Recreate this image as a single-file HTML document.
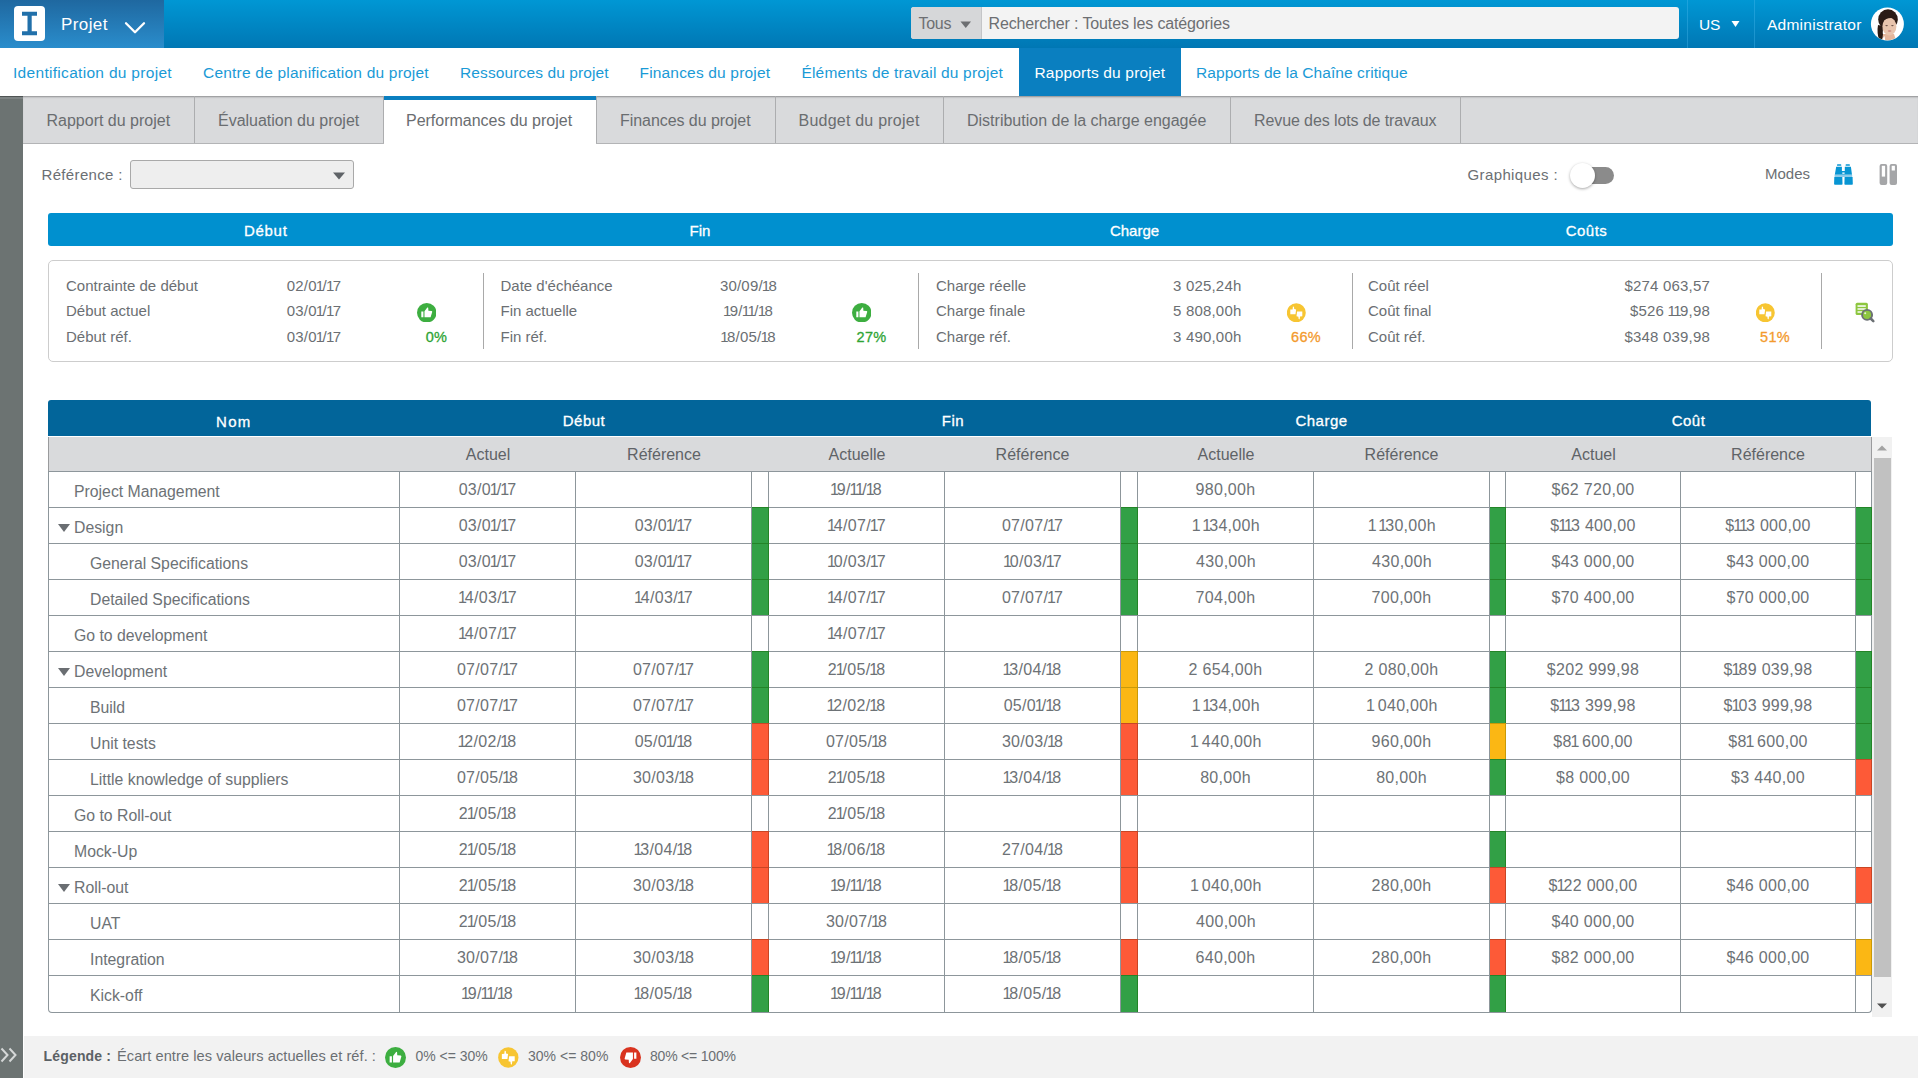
<!DOCTYPE html>
<html><head><meta charset="utf-8">
<style>
*{box-sizing:border-box;margin:0;padding:0}
html,body{width:1918px;height:1078px;overflow:hidden;background:#fff;font-family:"Liberation Sans",sans-serif;color:#666b70;position:relative}
div,span,svg{position:absolute}
.t{white-space:nowrap;line-height:1;}
.t span{position:static}
.t b{position:static;font-weight:normal;letter-spacing:0;margin:0 -2px 0 -1.2px}
.t i{position:static;font-style:normal;letter-spacing:0;margin:0 -1.6px 0 -1px}
#hdr{left:0;top:0;width:1918px;height:48px;background:linear-gradient(#0097d4,#0077b4)}
#hdrL{left:0;top:0;width:164px;height:48px;background:linear-gradient(#1f68a0,#2a8dcc)}
#logo{left:14px;top:6px;width:31px;height:35px;background:#fff;border-radius:4px}
#nav{left:0;top:48px;width:1918px;height:48px;background:#fff}
#navact{left:1019px;top:48px;width:162px;height:48px;background:#0a7fc0}
#side{left:0;top:96px;width:23px;height:982px;background:#6c7372}
#tabs{left:23px;top:96px;width:1895px;height:48px;background:#d9dadc;border-bottom:1px solid #b3b4b6;box-shadow:inset 0 2px 2px -1px rgba(0,0,0,.35)}
.tsep{top:96px;width:1px;height:47px;background:#acadaf}
#tabact{left:384px;top:96px;width:212px;height:48px;background:#fff;border-top:4px solid #0a7fc0}
#refdd{left:130px;top:160px;width:224px;height:29px;background:#eeeeee;border:1px solid #a9a9a9;border-radius:3px}
#sumbar{left:48px;top:213px;width:1845px;height:33px;background:#0090cf;border-radius:3px}
#sumbox{left:48px;top:260px;width:1845px;height:102px;border:1px solid #cdcdcd;border-radius:5px}
.dv{top:273px;width:1px;height:76px;background:#a9a9a9}
#th{left:48px;top:400px;width:1823px;height:36px;background:#02659a;border-radius:3px 3px 0 0}
#sub{left:48px;top:437px;width:1824px;height:34px;background:#d9dadc;border-left:1px solid #9a9b9d;border-right:1px solid #9a9b9d}
#tb{left:48px;top:471px;width:1824px;height:542px;border:1px solid #8d969b;border-top:none;border-radius:0 0 4px 4px}
.hl{left:48px;width:1823px;height:1px;background:#8d969b}
.vl{top:471px;width:1px;height:541px;background:#8d969b}
.ind{height:36px;border-top:1px solid;border-right:1px solid}
.tri{width:0;height:0;border-left:6px solid transparent;border-right:6px solid transparent;border-top:8px solid #6a6e72;left:58px}
#foot{left:24px;top:1036px;width:1894px;height:42px;background:#f2f2f2}
#sb{left:1872px;top:437px;width:20px;height:580px;background:#f1f1f1}
#thumb{left:1874px;top:458px;width:17px;height:519px;background:#c1c1c1}
</style></head><body>
<div id="hdr"></div>
<div id="hdrL"></div>
<div id="logo"></div>
<svg style="left:14px;top:6px" width="31" height="35" viewBox="0 0 31 35"><path d="M8 5.7h15v4h-5.3v15.6h5.3v4h-15v-4h5.5v-15.6h-5.5z" fill="#2170aa"/></svg>
<svg style="left:124px;top:21px" width="22" height="14" viewBox="0 0 22 14"><path d="M2 2.3l9 9 9-9" stroke="#fff" stroke-width="2.3" fill="none" stroke-linecap="round" stroke-linejoin="round"/></svg>
<!-- search -->
<div style="left:911px;top:7px;width:768px;height:32px;background:#f3f3f3;border-radius:3px"></div>
<div style="left:911px;top:7px;width:71px;height:32px;background:#d6d7d9;border-radius:3px 0 0 3px;border-right:1px solid #c4c5c7"></div>
<svg style="left:960px;top:21px" width="12" height="8" viewBox="0 0 12 8"><path d="M0.5 0.5h10.5l-5.25 6.6z" fill="#6d6f72"/></svg>
<div style="left:1687px;top:0;width:1px;height:48px;background:rgba(80,190,240,.35)"></div>
<div style="left:1754px;top:0;width:1px;height:48px;background:rgba(80,190,240,.35)"></div>
<svg style="left:1731px;top:20px" width="9" height="8" viewBox="0 0 9 8"><path d="M0.5 1h8l-4 6z" fill="#fff"/></svg>
<svg style="left:1870px;top:7px" width="35" height="35" viewBox="0 0 35 35">
<defs><clipPath id="av"><circle cx="17.4" cy="17" r="16.3"/></clipPath></defs>
<circle cx="17.4" cy="17" r="16.5" fill="#fff"/>
<g clip-path="url(#av)">
<path d="M8 18 Q6.5 26 9.5 34 L14 34 Q12 26 13 19 Z" fill="#2a1a14"/>
<ellipse cx="18" cy="12.5" rx="9.8" ry="10.3" fill="#2b1b15"/>
<path d="M13 27 L24 27 L26.5 35 L12 35 Z" fill="#e4b69c"/>
<path d="M11.5 33 L14.5 29 L15.5 35 L11 35Z" fill="#fff"/>
<ellipse cx="19.4" cy="19.5" rx="7" ry="9" fill="#e8c4ad"/>
<path d="M11.5 16 Q14 7.5 20 7.2 Q26.5 7.5 27.6 14.5 Q24.5 9.8 18.5 11.2 Q13.5 12.5 11.5 16 Z" fill="#2b1b15"/>
<ellipse cx="16.6" cy="18.6" rx="1.3" ry=".55" fill="#6a5048"/>
<ellipse cx="22.4" cy="18.6" rx="1.3" ry=".55" fill="#6a5048"/>
<ellipse cx="19.6" cy="24" rx="1.9" ry=".75" fill="#c98078"/>
</g>
</svg>
<div id="nav"></div>
<div id="navact"></div>
<div id="side"></div><div style="left:0;top:96px;width:23px;height:1px;background:#4f5454"></div><div style="left:0;top:97px;width:23px;height:2px;background:#7d8383"></div>
<div id="tabs"></div>
<div class="tsep" style="left:194px"></div>
<div class="tsep" style="left:383px"></div>
<div class="tsep" style="left:596px"></div>
<div class="tsep" style="left:775px"></div>
<div class="tsep" style="left:943px"></div>
<div class="tsep" style="left:1230px"></div>
<div class="tsep" style="left:1460px"></div>
<div id="tabact"></div>
<div id="refdd"></div>
<svg style="left:332px;top:171px" width="14" height="10" viewBox="0 0 14 10"><path d="M1 1.5h12l-6 7z" fill="#5f6367"/></svg>
<!-- toggle -->
<div style="left:1582px;top:167px;width:32px;height:17px;border-radius:9px;background:#8b8b8b"></div>
<div style="left:1570px;top:163px;width:25px;height:25px;border-radius:50%;background:#fff;box-shadow:0 1px 3px rgba(0,0,0,.35)"></div>
<!-- binoculars -->
<svg style="left:1833px;top:163px" width="21" height="23" viewBox="0 0 21 23">
<g fill="#0795d3"><rect x="4" y="1.3" width="4.3" height="1.5" rx=".6"/><rect x="12.6" y="1.3" width="4.3" height="1.5" rx=".6"/>
<path d="M3.2 3.8H8.9V7.9H11.8V3.8H17.9L19 11.8H1.8Z"/>
<path d="M1.3 14H9.3L9.5 21Q9.5 21.7 8.7 21.7H1.9Q1.1 21.7 1.1 21Z"/><path d="M11.6 14H19.6L19.8 21Q19.8 21.7 19 21.7H12.2Q11.4 21.7 11.4 21Z"/></g>
<rect x="1.6" y="11.8" width="17.6" height="2.2" fill="#8dcbe9"/>
<rect x="9.3" y="9.5" width="2.3" height="1.3" fill="#fff"/>
</svg>
<!-- columns icon -->
<svg style="left:1879px;top:163px" width="19" height="23" viewBox="0 0 19 23">
<rect x="0.6" y="1" width="7.6" height="21" rx="2" fill="#a5a6a8"/><rect x="10.6" y="1" width="7.4" height="21" rx="2" fill="#a5a6a8"/>
<rect x="2.8" y="2.8" width="3.3" height="10.8" fill="#fff"/><rect x="12.7" y="2.8" width="3.2" height="4.7" fill="#fff"/>
</svg>
<div id="sumbar"></div>
<div id="sumbox"></div>
<div class="dv" style="left:483px"></div>
<div class="dv" style="left:918px"></div>
<div class="dv" style="left:1352px"></div>
<div class="dv" style="left:1821px"></div>
<!-- summary icons -->
<svg style="left:416.7px;top:302.6px" width="19.5" height="19.5" viewBox="0 0 19.5 19.5"><circle cx="9.75" cy="9.75" r="9.75" fill="#3dae40"/><path d="M4.3 8.5H6.4V14.3H4.3Z M7.5 8.3L10.3 4.6Q10.9 4.1 11.2 4.8L11.4 7.7L14.6 7.9Q15.3 8.1 15.2 8.9L13.6 14.3L7.5 14.3Z" fill="#fff"/></svg>
<svg style="left:851.9px;top:302.6px" width="19.5" height="19.5" viewBox="0 0 19.5 19.5"><circle cx="9.75" cy="9.75" r="9.75" fill="#3dae40"/><path d="M4.3 8.5H6.4V14.3H4.3Z M7.5 8.3L10.3 4.6Q10.9 4.1 11.2 4.8L11.4 7.7L14.6 7.9Q15.3 8.1 15.2 8.9L13.6 14.3L7.5 14.3Z" fill="#fff"/></svg>
<svg style="left:1286.7px;top:302.6px" width="19" height="19.6" viewBox="0 0 19 19.6"><circle cx="9.3" cy="9.8" r="9.5" fill="#f7c532"/><g fill="#fff"><path d="M3.3 6.6L5.6 6.4L5.9 3.6Q6.6 3.3 7 4L7.2 6.1L9.1 6.6L8.5 11.2L3.3 11.2Z"/><path transform="rotate(180 9.3 9.9)" d="M3.3 6.6L5.6 6.4L5.9 3.6Q6.6 3.3 7 4L7.2 6.1L9.1 6.6L8.5 11.2L3.3 11.2Z"/></g></svg>
<svg style="left:1756px;top:302.6px" width="19" height="19.6" viewBox="0 0 19 19.6"><circle cx="9.3" cy="9.8" r="9.5" fill="#f7c532"/><g fill="#fff"><path d="M3.3 6.6L5.6 6.4L5.9 3.6Q6.6 3.3 7 4L7.2 6.1L9.1 6.6L8.5 11.2L3.3 11.2Z"/><path transform="rotate(180 9.3 9.9)" d="M3.3 6.6L5.6 6.4L5.9 3.6Q6.6 3.3 7 4L7.2 6.1L9.1 6.6L8.5 11.2L3.3 11.2Z"/></g></svg>
<!-- report icon -->
<svg style="left:1850px;top:298px" width="28" height="28" viewBox="0 0 28 28">
<rect x="5.6" y="4.8" width="12.3" height="12.3" rx="1.5" fill="#8dc63f"/>
<g fill="#e6f2d9"><rect x="7.5" y="7.1" width="8.3" height="1.9"/><rect x="7.5" y="10.1" width="8.3" height="1.8"/><rect x="7.5" y="13.1" width="5" height="1.8"/></g>
<circle cx="17.1" cy="16.9" r="5" fill="#8dc63f" stroke="#6b7074" stroke-width="1.9"/>
<circle cx="15.2" cy="15.3" r="1" fill="#fff" opacity=".8"/>
<path d="M20.7 20.5L23.3 23.1" stroke="#6b7074" stroke-width="2.6" stroke-linecap="round"/>
</svg>
<div id="th"></div>
<div id="sub"></div>
<div id="sb"></div>
<div id="thumb"></div>
<svg style="left:1876px;top:444px" width="12" height="8" viewBox="0 0 12 8"><path d="M1 6.5h10l-5-5z" fill="#a3a3a3"/></svg>
<svg style="left:1876px;top:1002px" width="12" height="8" viewBox="0 0 12 8"><path d="M1 1.5h10l-5 5z" fill="#505050"/></svg>
<div id="tb"></div>
<div class="hl" style="top:507px"></div><div class="hl" style="top:543px"></div><div class="hl" style="top:579px"></div>
<div class="hl" style="top:615px"></div><div class="hl" style="top:651px"></div><div class="hl" style="top:687px"></div>
<div class="hl" style="top:723px"></div><div class="hl" style="top:759px"></div><div class="hl" style="top:795px"></div>
<div class="hl" style="top:831px"></div><div class="hl" style="top:867px"></div><div class="hl" style="top:903px"></div>
<div class="hl" style="top:939px"></div><div class="hl" style="top:975px"></div>
<div class="hl" style="top:471px"></div>
<div class="vl" style="left:399px"></div><div class="vl" style="left:575px"></div><div class="vl" style="left:751px"></div>
<div class="vl" style="left:768px"></div><div class="vl" style="left:944px"></div><div class="vl" style="left:1120px"></div>
<div class="vl" style="left:1137px"></div><div class="vl" style="left:1313px"></div><div class="vl" style="left:1489px"></div>
<div class="vl" style="left:1505px"></div><div class="vl" style="left:1680px"></div><div class="vl" style="left:1855px"></div>
<div class="tri" style="top:524px"></div>
<div class="ind" style="left:752px;top:507px;width:17px;background:#32a046;border-color:#238427"></div>
<div class="ind" style="left:1121px;top:507px;width:17px;background:#32a046;border-color:#238427"></div>
<div class="ind" style="left:1490px;top:507px;width:16px;background:#32a046;border-color:#238427"></div>
<div class="ind" style="left:1856px;top:507px;width:16px;background:#32a046;border-color:#238427"></div>
<div class="ind" style="left:752px;top:543px;width:17px;background:#32a046;border-color:#238427"></div>
<div class="ind" style="left:1121px;top:543px;width:17px;background:#32a046;border-color:#238427"></div>
<div class="ind" style="left:1490px;top:543px;width:16px;background:#32a046;border-color:#238427"></div>
<div class="ind" style="left:1856px;top:543px;width:16px;background:#32a046;border-color:#238427"></div>
<div class="ind" style="left:752px;top:579px;width:17px;background:#32a046;border-color:#238427"></div>
<div class="ind" style="left:1121px;top:579px;width:17px;background:#32a046;border-color:#238427"></div>
<div class="ind" style="left:1490px;top:579px;width:16px;background:#32a046;border-color:#238427"></div>
<div class="ind" style="left:1856px;top:579px;width:16px;background:#32a046;border-color:#238427"></div>
<div class="tri" style="top:668px"></div>
<div class="ind" style="left:752px;top:651px;width:17px;background:#32a046;border-color:#238427"></div>
<div class="ind" style="left:1121px;top:651px;width:17px;background:#fbb714;border-color:#c99a08"></div>
<div class="ind" style="left:1490px;top:651px;width:16px;background:#32a046;border-color:#238427"></div>
<div class="ind" style="left:1856px;top:651px;width:16px;background:#32a046;border-color:#238427"></div>
<div class="ind" style="left:752px;top:687px;width:17px;background:#32a046;border-color:#238427"></div>
<div class="ind" style="left:1121px;top:687px;width:17px;background:#fbb714;border-color:#c99a08"></div>
<div class="ind" style="left:1490px;top:687px;width:16px;background:#32a046;border-color:#238427"></div>
<div class="ind" style="left:1856px;top:687px;width:16px;background:#32a046;border-color:#238427"></div>
<div class="ind" style="left:752px;top:723px;width:17px;background:#fd5a37;border-color:#c84524"></div>
<div class="ind" style="left:1121px;top:723px;width:17px;background:#fd5a37;border-color:#c84524"></div>
<div class="ind" style="left:1490px;top:723px;width:16px;background:#fbb714;border-color:#c99a08"></div>
<div class="ind" style="left:1856px;top:723px;width:16px;background:#32a046;border-color:#238427"></div>
<div class="ind" style="left:752px;top:759px;width:17px;background:#fd5a37;border-color:#c84524"></div>
<div class="ind" style="left:1121px;top:759px;width:17px;background:#fd5a37;border-color:#c84524"></div>
<div class="ind" style="left:1490px;top:759px;width:16px;background:#32a046;border-color:#238427"></div>
<div class="ind" style="left:1856px;top:759px;width:16px;background:#fd5a37;border-color:#c84524"></div>
<div class="ind" style="left:752px;top:831px;width:17px;background:#fd5a37;border-color:#c84524"></div>
<div class="ind" style="left:1121px;top:831px;width:17px;background:#fd5a37;border-color:#c84524"></div>
<div class="ind" style="left:1490px;top:831px;width:16px;background:#32a046;border-color:#238427"></div>
<div class="tri" style="top:884px"></div>
<div class="ind" style="left:752px;top:867px;width:17px;background:#fd5a37;border-color:#c84524"></div>
<div class="ind" style="left:1121px;top:867px;width:17px;background:#fd5a37;border-color:#c84524"></div>
<div class="ind" style="left:1490px;top:867px;width:16px;background:#fd5a37;border-color:#c84524"></div>
<div class="ind" style="left:1856px;top:867px;width:16px;background:#fd5a37;border-color:#c84524"></div>
<div class="ind" style="left:752px;top:939px;width:17px;background:#fd5a37;border-color:#c84524"></div>
<div class="ind" style="left:1121px;top:939px;width:17px;background:#fd5a37;border-color:#c84524"></div>
<div class="ind" style="left:1490px;top:939px;width:16px;background:#fd5a37;border-color:#c84524"></div>
<div class="ind" style="left:1856px;top:939px;width:16px;background:#fbb714;border-color:#c99a08"></div>
<div class="ind" style="left:752px;top:975px;width:17px;height:37px;background:#32a046;border-color:#238427"></div>
<div class="ind" style="left:1121px;top:975px;width:17px;height:37px;background:#32a046;border-color:#238427"></div>
<div class="ind" style="left:1490px;top:975px;width:16px;height:37px;background:#32a046;border-color:#238427"></div>
<div id="foot"></div>
<svg style="left:0;top:1047px" width="20" height="16" viewBox="0 0 20 16"><path d="M1.5 1.5l6 6.5-6 6.5 M9.5 1.5l6 6.5-6 6.5" stroke="#d5d7d7" stroke-width="2" fill="none"/></svg>
<svg style="left:385px;top:1047px" width="21" height="21" viewBox="0 0 19.5 19.5"><circle cx="9.75" cy="9.75" r="9.75" fill="#3dae40"/><path d="M4.3 8.5H6.4V14.3H4.3Z M7.5 8.3L10.3 4.6Q10.9 4.1 11.2 4.8L11.4 7.7L14.6 7.9Q15.3 8.1 15.2 8.9L13.6 14.3L7.5 14.3Z" fill="#fff"/></svg>
<svg style="left:498px;top:1047px" width="21" height="21" viewBox="0 0 19 19.6"><circle cx="9.3" cy="9.8" r="9.5" fill="#f7c532"/><g fill="#fff"><path d="M3.3 6.6L5.6 6.4L5.9 3.6Q6.6 3.3 7 4L7.2 6.1L9.1 6.6L8.5 11.2L3.3 11.2Z"/><path transform="rotate(180 9.3 9.9)" d="M3.3 6.6L5.6 6.4L5.9 3.6Q6.6 3.3 7 4L7.2 6.1L9.1 6.6L8.5 11.2L3.3 11.2Z"/></g></svg>
<svg style="left:620px;top:1047px" width="21" height="21" viewBox="0 0 19.5 19.5"><circle cx="9.75" cy="9.75" r="9.75" fill="#d9331f"/><path transform="rotate(180 9.75 9.75)" d="M4.3 8.5H6.4V14.3H4.3Z M7.5 8.3L10.3 4.6Q10.9 4.1 11.2 4.8L11.4 7.7L14.6 7.9Q15.3 8.1 15.2 8.9L13.6 14.3L7.5 14.3Z" fill="#fff"/></svg>
<span id="x0" class="t" style="top:15.61px;font-size:17px;color:#fff;letter-spacing:0.400px;left:61.00px;">Projet</span>
<span id="x1" class="t" style="top:16.46px;font-size:16px;color:#6d6f72;letter-spacing:-0.267px;left:918.50px;">Tous</span>
<span id="x2" class="t" style="top:16.46px;font-size:16px;color:#6d6f72;letter-spacing:-0.139px;left:988.50px;">Rechercher : Toutes les catégories</span>
<span id="x3" class="t" style="top:16.88px;font-size:15.5px;color:#fff;letter-spacing:-0.200px;left:1699.00px;">US</span>
<span id="x4" class="t" style="top:16.88px;font-size:15.5px;color:#fff;letter-spacing:0.250px;left:1767.00px;">Administrator</span>
<span id="x5" class="t" style="top:64.88px;font-size:15.5px;color:#1a9ad6;letter-spacing:0.304px;left:13.00px;">Identification du projet</span>
<span id="x6" class="t" style="top:64.88px;font-size:15.5px;color:#1a9ad6;letter-spacing:0.212px;left:203.00px;">Centre de planification du projet</span>
<span id="x7" class="t" style="top:64.88px;font-size:15.5px;color:#1a9ad6;letter-spacing:0.116px;left:460.00px;">Ressources du projet</span>
<span id="x8" class="t" style="top:64.88px;font-size:15.5px;color:#1a9ad6;letter-spacing:0.176px;left:639.50px;">Finances du projet</span>
<span id="x9" class="t" style="top:64.88px;font-size:15.5px;color:#1a9ad6;letter-spacing:0.171px;left:801.50px;">Éléments de travail du projet</span>
<span id="x10" class="t" style="top:64.88px;font-size:15.5px;color:#1a9ad6;letter-spacing:0.076px;left:1196.00px;">Rapports de la Chaîne critique</span>
<span id="x11" class="t" style="top:64.88px;font-size:15.5px;color:#fff;letter-spacing:0.176px;left:1034.50px;">Rapports du projet</span>
<span id="x12" class="t" style="top:113.46px;font-size:16px;color:#6a6d70;left:46.50px;">Rapport du projet</span>
<span id="x13" class="t" style="top:113.46px;font-size:16px;color:#6a6d70;letter-spacing:-0.011px;left:218.00px;">Évaluation du projet</span>
<span id="x14" class="t" style="top:113.46px;font-size:16px;color:#6a6d70;letter-spacing:-0.010px;left:406.00px;">Performances du projet</span>
<span id="x15" class="t" style="top:113.46px;font-size:16px;color:#6a6d70;letter-spacing:-0.059px;left:620.00px;">Finances du projet</span>
<span id="x16" class="t" style="top:113.46px;font-size:16px;color:#6a6d70;letter-spacing:0.227px;left:798.50px;">Budget du projet</span>
<span id="x17" class="t" style="top:113.46px;font-size:16px;color:#6a6d70;left:967.00px;">Distribution de la charge engagée</span>
<span id="x18" class="t" style="top:113.46px;font-size:16px;color:#6a6d70;letter-spacing:-0.100px;left:1254.00px;">Revue des lots de travaux</span>
<span id="x19" class="t" style="top:167.30px;font-size:15px;color:#6b6f73;letter-spacing:0.340px;left:41.50px;">Référence :</span>
<span id="x20" class="t" style="top:167.30px;font-size:15px;color:#6b6f73;letter-spacing:0.382px;left:1467.50px;">Graphiques :</span>
<span id="x21" class="t" style="top:166.30px;font-size:15px;color:#6b6f73;left:1765.00px;">Modes</span>
<div class="t" style="top:223.30px;font-size:15px;color:#fff;-webkit-text-stroke:0.3px currentColor;letter-spacing:0.700px;left:-34.25px;width:600px;text-align:center;"><span id="x22">Début</span></div>
<div class="t" style="top:223.30px;font-size:15px;color:#fff;-webkit-text-stroke:0.3px currentColor;left:400.00px;width:600px;text-align:center;"><span id="x23">Fin</span></div>
<div class="t" style="top:223.30px;font-size:15px;color:#fff;-webkit-text-stroke:0.3px currentColor;left:834.50px;width:600px;text-align:center;"><span id="x24">Charge</span></div>
<div class="t" style="top:223.30px;font-size:15px;color:#fff;-webkit-text-stroke:0.3px currentColor;letter-spacing:0.500px;left:1286.50px;width:600px;text-align:center;"><span id="x25">Coûts</span></div>
<span id="x26" class="t" style="top:278.30px;font-size:15px;color:#6b6f73;letter-spacing:0.011px;left:66.00px;">Contrainte de début</span>
<div class="t" style="top:278.30px;font-size:15px;color:#6b6f73;letter-spacing:0.200px;left:14.00px;width:600px;text-align:center;"><span id="x27">02/0<i>1</i>/<i>1</i>7</span></div>
<span id="x28" class="t" style="top:303.30px;font-size:15px;color:#6b6f73;left:66.00px;">Début actuel</span>
<div class="t" style="top:303.30px;font-size:15px;color:#6b6f73;letter-spacing:0.200px;left:14.00px;width:600px;text-align:center;"><span id="x29">03/0<i>1</i>/<i>1</i>7</span></div>
<span id="x30" class="t" style="top:329.30px;font-size:15px;color:#6b6f73;left:66.00px;">Début réf.</span>
<div class="t" style="top:329.30px;font-size:15px;color:#6b6f73;letter-spacing:0.200px;left:14.00px;width:600px;text-align:center;"><span id="x31">03/0<i>1</i>/<i>1</i>7</span></div>
<div class="t" style="top:329.73px;font-size:14.5px;color:#2fa434;-webkit-text-stroke:0.3px currentColor;letter-spacing:0.300px;left:136.50px;width:600px;text-align:center;"><span id="x32">0%</span></div>
<span id="x33" class="t" style="top:278.30px;font-size:15px;color:#6b6f73;left:500.50px;">Date d'échéance</span>
<div class="t" style="top:278.30px;font-size:15px;color:#6b6f73;letter-spacing:0.200px;left:448.50px;width:600px;text-align:center;"><span id="x34">30/09/<i>1</i>8</span></div>
<span id="x35" class="t" style="top:303.30px;font-size:15px;color:#6b6f73;left:500.50px;">Fin actuelle</span>
<div class="t" style="top:303.30px;font-size:15px;color:#6b6f73;letter-spacing:0.200px;left:448.50px;width:600px;text-align:center;"><span id="x36"><i>1</i>9/<i>1</i><i>1</i>/<i>1</i>8</span></div>
<span id="x37" class="t" style="top:329.30px;font-size:15px;color:#6b6f73;left:500.50px;">Fin réf.</span>
<div class="t" style="top:329.30px;font-size:15px;color:#6b6f73;letter-spacing:0.200px;left:448.50px;width:600px;text-align:center;"><span id="x38"><i>1</i>8/05/<i>1</i>8</span></div>
<div class="t" style="top:329.73px;font-size:14.5px;color:#2fa434;-webkit-text-stroke:0.3px currentColor;letter-spacing:0.300px;left:571.50px;width:600px;text-align:center;"><span id="x39">27%</span></div>
<span id="x40" class="t" style="top:278.30px;font-size:15px;color:#6b6f73;left:936.00px;">Charge réelle</span>
<div class="t" style="top:278.30px;font-size:15px;color:#6b6f73;letter-spacing:0.200px;left:641.50px;width:600px;text-align:right;"><span id="x41">3 025,24h</span></div>
<span id="x42" class="t" style="top:303.30px;font-size:15px;color:#6b6f73;left:936.00px;">Charge finale</span>
<div class="t" style="top:303.30px;font-size:15px;color:#6b6f73;letter-spacing:0.200px;left:641.50px;width:600px;text-align:right;"><span id="x43">5 808,00h</span></div>
<span id="x44" class="t" style="top:329.30px;font-size:15px;color:#6b6f73;left:936.00px;">Charge réf.</span>
<div class="t" style="top:329.30px;font-size:15px;color:#6b6f73;letter-spacing:0.200px;left:641.50px;width:600px;text-align:right;"><span id="x45">3 490,00h</span></div>
<div class="t" style="top:329.73px;font-size:14.5px;color:#f39a2d;-webkit-text-stroke:0.3px currentColor;letter-spacing:0.300px;left:1006.00px;width:600px;text-align:center;"><span id="x46">66%</span></div>
<span id="x47" class="t" style="top:278.30px;font-size:15px;color:#6b6f73;left:1368.00px;">Coût réel</span>
<div class="t" style="top:278.30px;font-size:15px;color:#6b6f73;letter-spacing:0.200px;left:1110.00px;width:600px;text-align:right;"><span id="x48">$274 063,57</span></div>
<span id="x49" class="t" style="top:303.30px;font-size:15px;color:#6b6f73;left:1368.00px;">Coût final</span>
<div class="t" style="top:303.30px;font-size:15px;color:#6b6f73;letter-spacing:0.200px;left:1110.00px;width:600px;text-align:right;"><span id="x50">$526 <i>1</i><i>1</i>9,98</span></div>
<span id="x51" class="t" style="top:329.30px;font-size:15px;color:#6b6f73;left:1368.00px;">Coût réf.</span>
<div class="t" style="top:329.30px;font-size:15px;color:#6b6f73;letter-spacing:0.200px;left:1110.00px;width:600px;text-align:right;"><span id="x52">$348 039,98</span></div>
<div class="t" style="top:329.73px;font-size:14.5px;color:#f39a2d;-webkit-text-stroke:0.3px currentColor;letter-spacing:0.300px;left:1475.00px;width:600px;text-align:center;"><span id="x53">51%</span></div>
<div class="t" style="top:414.30px;font-size:15px;color:#fff;-webkit-text-stroke:0.3px currentColor;letter-spacing:1.200px;left:-66.25px;width:600px;text-align:center;"><span id="x54">Nom</span></div>
<div class="t" style="top:413.30px;font-size:15px;color:#fff;-webkit-text-stroke:0.3px currentColor;letter-spacing:0.500px;left:284.00px;width:600px;text-align:center;"><span id="x55">Début</span></div>
<div class="t" style="top:413.30px;font-size:15px;color:#fff;-webkit-text-stroke:0.3px currentColor;letter-spacing:0.500px;left:653.00px;width:600px;text-align:center;"><span id="x56">Fin</span></div>
<div class="t" style="top:413.30px;font-size:15px;color:#fff;-webkit-text-stroke:0.3px currentColor;letter-spacing:0.500px;left:1021.50px;width:600px;text-align:center;"><span id="x57">Charge</span></div>
<div class="t" style="top:413.30px;font-size:15px;color:#fff;-webkit-text-stroke:0.3px currentColor;letter-spacing:0.500px;left:1388.50px;width:600px;text-align:center;"><span id="x58">Coût</span></div>
<div class="t" style="top:447.46px;font-size:16px;color:#5f6367;left:188.00px;width:600px;text-align:center;"><span id="x59">Actuel</span></div>
<div class="t" style="top:447.46px;font-size:16px;color:#5f6367;left:364.00px;width:600px;text-align:center;"><span id="x60">Référence</span></div>
<div class="t" style="top:447.46px;font-size:16px;color:#5f6367;left:557.00px;width:600px;text-align:center;"><span id="x61">Actuelle</span></div>
<div class="t" style="top:447.46px;font-size:16px;color:#5f6367;left:732.50px;width:600px;text-align:center;"><span id="x62">Référence</span></div>
<div class="t" style="top:447.46px;font-size:16px;color:#5f6367;left:926.00px;width:600px;text-align:center;"><span id="x63">Actuelle</span></div>
<div class="t" style="top:447.46px;font-size:16px;color:#5f6367;left:1101.50px;width:600px;text-align:center;"><span id="x64">Référence</span></div>
<div class="t" style="top:447.46px;font-size:16px;color:#5f6367;left:1293.50px;width:600px;text-align:center;"><span id="x65">Actuel</span></div>
<div class="t" style="top:447.46px;font-size:16px;color:#5f6367;left:1468.00px;width:600px;text-align:center;"><span id="x66">Référence</span></div>
<span id="x67" class="t" style="top:1049.15px;font-size:14px;color:#5b6165;font-weight:bold;letter-spacing:0.175px;left:43.50px;">Légende :</span>
<span id="x68" class="t" style="top:1048.64px;font-size:14.6px;color:#6b6f73;letter-spacing:0.062px;left:117.00px;">Écart entre les valeurs actuelles et réf. :</span>
<span id="x69" class="t" style="top:1049.15px;font-size:14px;color:#6b6f73;letter-spacing:-0.025px;left:415.50px;">0% &lt;= 30%</span>
<span id="x70" class="t" style="top:1049.15px;font-size:14px;color:#6b6f73;letter-spacing:0.022px;left:528.00px;">30% &lt;= 80%</span>
<span id="x71" class="t" style="top:1049.15px;font-size:14px;color:#6b6f73;letter-spacing:-0.200px;left:650.00px;">80% &lt;= 100%</span>
<span id="x72" class="t" style="top:483.63px;font-size:15.8px;color:#6d7276;left:74.00px;">Project Management</span>
<div class="t" style="top:482.46px;font-size:16px;color:#6d7276;letter-spacing:0.300px;left:187.50px;width:600px;text-align:center;"><span id="x73">03/0<b class="o">1</b>/<b class="o">1</b>7</span></div>
<div class="t" style="top:482.46px;font-size:16px;color:#6d7276;letter-spacing:0.300px;left:556.50px;width:600px;text-align:center;"><span id="x74"><b class="o">1</b>9/<b class="o">1</b><b class="o">1</b>/<b class="o">1</b>8</span></div>
<div class="t" style="top:482.46px;font-size:16px;color:#6d7276;letter-spacing:0.300px;left:925.50px;width:600px;text-align:center;"><span id="x75">980,00h</span></div>
<div class="t" style="top:482.46px;font-size:16px;color:#6d7276;letter-spacing:0.300px;left:1293.00px;width:600px;text-align:center;"><span id="x76">$62 720,00</span></div>
<span id="x77" class="t" style="top:519.63px;font-size:15.8px;color:#6d7276;left:74.00px;">Design</span>
<div class="t" style="top:518.46px;font-size:16px;color:#6d7276;letter-spacing:0.300px;left:187.50px;width:600px;text-align:center;"><span id="x78">03/0<b class="o">1</b>/<b class="o">1</b>7</span></div>
<div class="t" style="top:518.46px;font-size:16px;color:#6d7276;letter-spacing:0.300px;left:363.50px;width:600px;text-align:center;"><span id="x79">03/0<b class="o">1</b>/<b class="o">1</b>7</span></div>
<div class="t" style="top:518.46px;font-size:16px;color:#6d7276;letter-spacing:0.300px;left:557.00px;width:600px;text-align:center;"><span id="x80"><b class="o">1</b>4/07/<b class="o">1</b>7</span></div>
<div class="t" style="top:518.46px;font-size:16px;color:#6d7276;letter-spacing:0.300px;left:732.50px;width:600px;text-align:center;"><span id="x81">07/07/<b class="o">1</b>7</span></div>
<div class="t" style="top:518.46px;font-size:16px;color:#6d7276;letter-spacing:0.300px;left:926.50px;width:600px;text-align:center;"><span id="x82"><b class="o">1</b> <b class="o">1</b>34,00h</span></div>
<div class="t" style="top:518.46px;font-size:16px;color:#6d7276;letter-spacing:0.300px;left:1102.50px;width:600px;text-align:center;"><span id="x83"><b class="o">1</b> <b class="o">1</b>30,00h</span></div>
<div class="t" style="top:518.46px;font-size:16px;color:#6d7276;letter-spacing:0.300px;left:1293.00px;width:600px;text-align:center;"><span id="x84">$<b class="o">1</b><b class="o">1</b>3 400,00</span></div>
<div class="t" style="top:518.46px;font-size:16px;color:#6d7276;letter-spacing:0.300px;left:1468.00px;width:600px;text-align:center;"><span id="x85">$<b class="o">1</b><b class="o">1</b>3 000,00</span></div>
<span id="x86" class="t" style="top:555.63px;font-size:15.8px;color:#6d7276;left:90.00px;">General Specifications</span>
<div class="t" style="top:554.46px;font-size:16px;color:#6d7276;letter-spacing:0.300px;left:187.50px;width:600px;text-align:center;"><span id="x87">03/0<b class="o">1</b>/<b class="o">1</b>7</span></div>
<div class="t" style="top:554.46px;font-size:16px;color:#6d7276;letter-spacing:0.300px;left:363.50px;width:600px;text-align:center;"><span id="x88">03/0<b class="o">1</b>/<b class="o">1</b>7</span></div>
<div class="t" style="top:554.46px;font-size:16px;color:#6d7276;letter-spacing:0.300px;left:557.00px;width:600px;text-align:center;"><span id="x89"><b class="o">1</b>0/03/<b class="o">1</b>7</span></div>
<div class="t" style="top:554.46px;font-size:16px;color:#6d7276;letter-spacing:0.300px;left:733.00px;width:600px;text-align:center;"><span id="x90"><b class="o">1</b>0/03/<b class="o">1</b>7</span></div>
<div class="t" style="top:554.46px;font-size:16px;color:#6d7276;letter-spacing:0.300px;left:926.00px;width:600px;text-align:center;"><span id="x91">430,00h</span></div>
<div class="t" style="top:554.46px;font-size:16px;color:#6d7276;letter-spacing:0.300px;left:1102.00px;width:600px;text-align:center;"><span id="x92">430,00h</span></div>
<div class="t" style="top:554.46px;font-size:16px;color:#6d7276;letter-spacing:0.300px;left:1293.00px;width:600px;text-align:center;"><span id="x93">$43 000,00</span></div>
<div class="t" style="top:554.46px;font-size:16px;color:#6d7276;letter-spacing:0.300px;left:1468.00px;width:600px;text-align:center;"><span id="x94">$43 000,00</span></div>
<span id="x95" class="t" style="top:591.63px;font-size:15.8px;color:#6d7276;left:90.00px;">Detailed Specifications</span>
<div class="t" style="top:590.46px;font-size:16px;color:#6d7276;letter-spacing:0.300px;left:188.00px;width:600px;text-align:center;"><span id="x96"><b class="o">1</b>4/03/<b class="o">1</b>7</span></div>
<div class="t" style="top:590.46px;font-size:16px;color:#6d7276;letter-spacing:0.300px;left:364.00px;width:600px;text-align:center;"><span id="x97"><b class="o">1</b>4/03/<b class="o">1</b>7</span></div>
<div class="t" style="top:590.46px;font-size:16px;color:#6d7276;letter-spacing:0.300px;left:557.00px;width:600px;text-align:center;"><span id="x98"><b class="o">1</b>4/07/<b class="o">1</b>7</span></div>
<div class="t" style="top:590.46px;font-size:16px;color:#6d7276;letter-spacing:0.300px;left:732.50px;width:600px;text-align:center;"><span id="x99">07/07/<b class="o">1</b>7</span></div>
<div class="t" style="top:590.46px;font-size:16px;color:#6d7276;letter-spacing:0.300px;left:925.50px;width:600px;text-align:center;"><span id="x100">704,00h</span></div>
<div class="t" style="top:590.46px;font-size:16px;color:#6d7276;letter-spacing:0.300px;left:1101.50px;width:600px;text-align:center;"><span id="x101">700,00h</span></div>
<div class="t" style="top:590.46px;font-size:16px;color:#6d7276;letter-spacing:0.300px;left:1293.00px;width:600px;text-align:center;"><span id="x102">$70 400,00</span></div>
<div class="t" style="top:590.46px;font-size:16px;color:#6d7276;letter-spacing:0.300px;left:1468.00px;width:600px;text-align:center;"><span id="x103">$70 000,00</span></div>
<span id="x104" class="t" style="top:627.63px;font-size:15.8px;color:#6d7276;left:74.00px;">Go to development</span>
<div class="t" style="top:626.46px;font-size:16px;color:#6d7276;letter-spacing:0.300px;left:188.00px;width:600px;text-align:center;"><span id="x105"><b class="o">1</b>4/07/<b class="o">1</b>7</span></div>
<div class="t" style="top:626.46px;font-size:16px;color:#6d7276;letter-spacing:0.300px;left:557.00px;width:600px;text-align:center;"><span id="x106"><b class="o">1</b>4/07/<b class="o">1</b>7</span></div>
<span id="x107" class="t" style="top:663.63px;font-size:15.8px;color:#6d7276;left:74.00px;">Development</span>
<div class="t" style="top:662.46px;font-size:16px;color:#6d7276;letter-spacing:0.300px;left:187.50px;width:600px;text-align:center;"><span id="x108">07/07/<b class="o">1</b>7</span></div>
<div class="t" style="top:662.46px;font-size:16px;color:#6d7276;letter-spacing:0.300px;left:363.50px;width:600px;text-align:center;"><span id="x109">07/07/<b class="o">1</b>7</span></div>
<div class="t" style="top:662.46px;font-size:16px;color:#6d7276;letter-spacing:0.300px;left:556.50px;width:600px;text-align:center;"><span id="x110">2<b class="o">1</b>/05/<b class="o">1</b>8</span></div>
<div class="t" style="top:662.46px;font-size:16px;color:#6d7276;letter-spacing:0.300px;left:732.50px;width:600px;text-align:center;"><span id="x111"><b class="o">1</b>3/04/<b class="o">1</b>8</span></div>
<div class="t" style="top:662.46px;font-size:16px;color:#6d7276;letter-spacing:0.300px;left:925.50px;width:600px;text-align:center;"><span id="x112">2 654,00h</span></div>
<div class="t" style="top:662.46px;font-size:16px;color:#6d7276;letter-spacing:0.300px;left:1101.50px;width:600px;text-align:center;"><span id="x113">2 080,00h</span></div>
<div class="t" style="top:662.46px;font-size:16px;color:#6d7276;letter-spacing:0.300px;left:1293.00px;width:600px;text-align:center;"><span id="x114">$202 999,98</span></div>
<div class="t" style="top:662.46px;font-size:16px;color:#6d7276;letter-spacing:0.300px;left:1468.00px;width:600px;text-align:center;"><span id="x115">$<b class="o">1</b>89 039,98</span></div>
<span id="x116" class="t" style="top:699.63px;font-size:15.8px;color:#6d7276;left:90.00px;">Build</span>
<div class="t" style="top:698.46px;font-size:16px;color:#6d7276;letter-spacing:0.300px;left:187.50px;width:600px;text-align:center;"><span id="x117">07/07/<b class="o">1</b>7</span></div>
<div class="t" style="top:698.46px;font-size:16px;color:#6d7276;letter-spacing:0.300px;left:363.50px;width:600px;text-align:center;"><span id="x118">07/07/<b class="o">1</b>7</span></div>
<div class="t" style="top:698.46px;font-size:16px;color:#6d7276;letter-spacing:0.300px;left:556.50px;width:600px;text-align:center;"><span id="x119"><b class="o">1</b>2/02/<b class="o">1</b>8</span></div>
<div class="t" style="top:698.46px;font-size:16px;color:#6d7276;letter-spacing:0.300px;left:732.50px;width:600px;text-align:center;"><span id="x120">05/0<b class="o">1</b>/<b class="o">1</b>8</span></div>
<div class="t" style="top:698.46px;font-size:16px;color:#6d7276;letter-spacing:0.300px;left:926.50px;width:600px;text-align:center;"><span id="x121"><b class="o">1</b> <b class="o">1</b>34,00h</span></div>
<div class="t" style="top:698.46px;font-size:16px;color:#6d7276;letter-spacing:0.300px;left:1102.50px;width:600px;text-align:center;"><span id="x122"><b class="o">1</b> 040,00h</span></div>
<div class="t" style="top:698.46px;font-size:16px;color:#6d7276;letter-spacing:0.300px;left:1293.00px;width:600px;text-align:center;"><span id="x123">$<b class="o">1</b><b class="o">1</b>3 399,98</span></div>
<div class="t" style="top:698.46px;font-size:16px;color:#6d7276;letter-spacing:0.300px;left:1468.00px;width:600px;text-align:center;"><span id="x124">$<b class="o">1</b>03 999,98</span></div>
<span id="x125" class="t" style="top:735.63px;font-size:15.8px;color:#6d7276;left:90.00px;">Unit tests</span>
<div class="t" style="top:734.46px;font-size:16px;color:#6d7276;letter-spacing:0.300px;left:187.50px;width:600px;text-align:center;"><span id="x126"><b class="o">1</b>2/02/<b class="o">1</b>8</span></div>
<div class="t" style="top:734.46px;font-size:16px;color:#6d7276;letter-spacing:0.300px;left:363.50px;width:600px;text-align:center;"><span id="x127">05/0<b class="o">1</b>/<b class="o">1</b>8</span></div>
<div class="t" style="top:734.46px;font-size:16px;color:#6d7276;letter-spacing:0.300px;left:556.50px;width:600px;text-align:center;"><span id="x128">07/05/<b class="o">1</b>8</span></div>
<div class="t" style="top:734.46px;font-size:16px;color:#6d7276;letter-spacing:0.300px;left:732.50px;width:600px;text-align:center;"><span id="x129">30/03/<b class="o">1</b>8</span></div>
<div class="t" style="top:734.46px;font-size:16px;color:#6d7276;letter-spacing:0.300px;left:926.50px;width:600px;text-align:center;"><span id="x130"><b class="o">1</b> 440,00h</span></div>
<div class="t" style="top:734.46px;font-size:16px;color:#6d7276;letter-spacing:0.300px;left:1101.50px;width:600px;text-align:center;"><span id="x131">960,00h</span></div>
<div class="t" style="top:734.46px;font-size:16px;color:#6d7276;letter-spacing:0.300px;left:1293.00px;width:600px;text-align:center;"><span id="x132">$8<b class="o">1</b> 600,00</span></div>
<div class="t" style="top:734.46px;font-size:16px;color:#6d7276;letter-spacing:0.300px;left:1468.00px;width:600px;text-align:center;"><span id="x133">$8<b class="o">1</b> 600,00</span></div>
<span id="x134" class="t" style="top:771.63px;font-size:15.8px;color:#6d7276;left:90.00px;">Little knowledge of suppliers</span>
<div class="t" style="top:770.46px;font-size:16px;color:#6d7276;letter-spacing:0.300px;left:187.50px;width:600px;text-align:center;"><span id="x135">07/05/<b class="o">1</b>8</span></div>
<div class="t" style="top:770.46px;font-size:16px;color:#6d7276;letter-spacing:0.300px;left:363.50px;width:600px;text-align:center;"><span id="x136">30/03/<b class="o">1</b>8</span></div>
<div class="t" style="top:770.46px;font-size:16px;color:#6d7276;letter-spacing:0.300px;left:556.50px;width:600px;text-align:center;"><span id="x137">2<b class="o">1</b>/05/<b class="o">1</b>8</span></div>
<div class="t" style="top:770.46px;font-size:16px;color:#6d7276;letter-spacing:0.300px;left:732.50px;width:600px;text-align:center;"><span id="x138"><b class="o">1</b>3/04/<b class="o">1</b>8</span></div>
<div class="t" style="top:770.46px;font-size:16px;color:#6d7276;letter-spacing:0.300px;left:925.50px;width:600px;text-align:center;"><span id="x139">80,00h</span></div>
<div class="t" style="top:770.46px;font-size:16px;color:#6d7276;letter-spacing:0.300px;left:1101.50px;width:600px;text-align:center;"><span id="x140">80,00h</span></div>
<div class="t" style="top:770.46px;font-size:16px;color:#6d7276;letter-spacing:0.300px;left:1293.00px;width:600px;text-align:center;"><span id="x141">$8 000,00</span></div>
<div class="t" style="top:770.46px;font-size:16px;color:#6d7276;letter-spacing:0.300px;left:1468.00px;width:600px;text-align:center;"><span id="x142">$3 440,00</span></div>
<span id="x143" class="t" style="top:807.63px;font-size:15.8px;color:#6d7276;left:74.00px;">Go to Roll-out</span>
<div class="t" style="top:806.46px;font-size:16px;color:#6d7276;letter-spacing:0.300px;left:187.50px;width:600px;text-align:center;"><span id="x144">2<b class="o">1</b>/05/<b class="o">1</b>8</span></div>
<div class="t" style="top:806.46px;font-size:16px;color:#6d7276;letter-spacing:0.300px;left:556.50px;width:600px;text-align:center;"><span id="x145">2<b class="o">1</b>/05/<b class="o">1</b>8</span></div>
<span id="x146" class="t" style="top:843.63px;font-size:15.8px;color:#6d7276;left:74.00px;">Mock-Up</span>
<div class="t" style="top:842.46px;font-size:16px;color:#6d7276;letter-spacing:0.300px;left:187.50px;width:600px;text-align:center;"><span id="x147">2<b class="o">1</b>/05/<b class="o">1</b>8</span></div>
<div class="t" style="top:842.46px;font-size:16px;color:#6d7276;letter-spacing:0.300px;left:363.50px;width:600px;text-align:center;"><span id="x148"><b class="o">1</b>3/04/<b class="o">1</b>8</span></div>
<div class="t" style="top:842.46px;font-size:16px;color:#6d7276;letter-spacing:0.300px;left:556.50px;width:600px;text-align:center;"><span id="x149"><b class="o">1</b>8/06/<b class="o">1</b>8</span></div>
<div class="t" style="top:842.46px;font-size:16px;color:#6d7276;letter-spacing:0.300px;left:732.50px;width:600px;text-align:center;"><span id="x150">27/04/<b class="o">1</b>8</span></div>
<span id="x151" class="t" style="top:879.63px;font-size:15.8px;color:#6d7276;left:74.00px;">Roll-out</span>
<div class="t" style="top:878.46px;font-size:16px;color:#6d7276;letter-spacing:0.300px;left:187.50px;width:600px;text-align:center;"><span id="x152">2<b class="o">1</b>/05/<b class="o">1</b>8</span></div>
<div class="t" style="top:878.46px;font-size:16px;color:#6d7276;letter-spacing:0.300px;left:363.50px;width:600px;text-align:center;"><span id="x153">30/03/<b class="o">1</b>8</span></div>
<div class="t" style="top:878.46px;font-size:16px;color:#6d7276;letter-spacing:0.300px;left:556.50px;width:600px;text-align:center;"><span id="x154"><b class="o">1</b>9/<b class="o">1</b><b class="o">1</b>/<b class="o">1</b>8</span></div>
<div class="t" style="top:878.46px;font-size:16px;color:#6d7276;letter-spacing:0.300px;left:732.50px;width:600px;text-align:center;"><span id="x155"><b class="o">1</b>8/05/<b class="o">1</b>8</span></div>
<div class="t" style="top:878.46px;font-size:16px;color:#6d7276;letter-spacing:0.300px;left:926.50px;width:600px;text-align:center;"><span id="x156"><b class="o">1</b> 040,00h</span></div>
<div class="t" style="top:878.46px;font-size:16px;color:#6d7276;letter-spacing:0.300px;left:1101.50px;width:600px;text-align:center;"><span id="x157">280,00h</span></div>
<div class="t" style="top:878.46px;font-size:16px;color:#6d7276;letter-spacing:0.300px;left:1293.00px;width:600px;text-align:center;"><span id="x158">$<b class="o">1</b>22 000,00</span></div>
<div class="t" style="top:878.46px;font-size:16px;color:#6d7276;letter-spacing:0.300px;left:1468.00px;width:600px;text-align:center;"><span id="x159">$46 000,00</span></div>
<span id="x160" class="t" style="top:915.63px;font-size:15.8px;color:#6d7276;left:90.00px;">UAT</span>
<div class="t" style="top:914.46px;font-size:16px;color:#6d7276;letter-spacing:0.300px;left:187.50px;width:600px;text-align:center;"><span id="x161">2<b class="o">1</b>/05/<b class="o">1</b>8</span></div>
<div class="t" style="top:914.46px;font-size:16px;color:#6d7276;letter-spacing:0.300px;left:556.50px;width:600px;text-align:center;"><span id="x162">30/07/<b class="o">1</b>8</span></div>
<div class="t" style="top:914.46px;font-size:16px;color:#6d7276;letter-spacing:0.300px;left:926.00px;width:600px;text-align:center;"><span id="x163">400,00h</span></div>
<div class="t" style="top:914.46px;font-size:16px;color:#6d7276;letter-spacing:0.300px;left:1293.00px;width:600px;text-align:center;"><span id="x164">$40 000,00</span></div>
<span id="x165" class="t" style="top:951.63px;font-size:15.8px;color:#6d7276;left:90.00px;">Integration</span>
<div class="t" style="top:950.46px;font-size:16px;color:#6d7276;letter-spacing:0.300px;left:187.50px;width:600px;text-align:center;"><span id="x166">30/07/<b class="o">1</b>8</span></div>
<div class="t" style="top:950.46px;font-size:16px;color:#6d7276;letter-spacing:0.300px;left:363.50px;width:600px;text-align:center;"><span id="x167">30/03/<b class="o">1</b>8</span></div>
<div class="t" style="top:950.46px;font-size:16px;color:#6d7276;letter-spacing:0.300px;left:556.50px;width:600px;text-align:center;"><span id="x168"><b class="o">1</b>9/<b class="o">1</b><b class="o">1</b>/<b class="o">1</b>8</span></div>
<div class="t" style="top:950.46px;font-size:16px;color:#6d7276;letter-spacing:0.300px;left:732.50px;width:600px;text-align:center;"><span id="x169"><b class="o">1</b>8/05/<b class="o">1</b>8</span></div>
<div class="t" style="top:950.46px;font-size:16px;color:#6d7276;letter-spacing:0.300px;left:925.50px;width:600px;text-align:center;"><span id="x170">640,00h</span></div>
<div class="t" style="top:950.46px;font-size:16px;color:#6d7276;letter-spacing:0.300px;left:1101.50px;width:600px;text-align:center;"><span id="x171">280,00h</span></div>
<div class="t" style="top:950.46px;font-size:16px;color:#6d7276;letter-spacing:0.300px;left:1293.00px;width:600px;text-align:center;"><span id="x172">$82 000,00</span></div>
<div class="t" style="top:950.46px;font-size:16px;color:#6d7276;letter-spacing:0.300px;left:1468.00px;width:600px;text-align:center;"><span id="x173">$46 000,00</span></div>
<span id="x174" class="t" style="top:987.63px;font-size:15.8px;color:#6d7276;left:90.00px;">Kick-off</span>
<div class="t" style="top:986.46px;font-size:16px;color:#6d7276;letter-spacing:0.300px;left:187.50px;width:600px;text-align:center;"><span id="x175"><b class="o">1</b>9/<b class="o">1</b><b class="o">1</b>/<b class="o">1</b>8</span></div>
<div class="t" style="top:986.46px;font-size:16px;color:#6d7276;letter-spacing:0.300px;left:363.50px;width:600px;text-align:center;"><span id="x176"><b class="o">1</b>8/05/<b class="o">1</b>8</span></div>
<div class="t" style="top:986.46px;font-size:16px;color:#6d7276;letter-spacing:0.300px;left:556.50px;width:600px;text-align:center;"><span id="x177"><b class="o">1</b>9/<b class="o">1</b><b class="o">1</b>/<b class="o">1</b>8</span></div>
<div class="t" style="top:986.46px;font-size:16px;color:#6d7276;letter-spacing:0.300px;left:732.50px;width:600px;text-align:center;"><span id="x178"><b class="o">1</b>8/05/<b class="o">1</b>8</span></div>
</body></html>
